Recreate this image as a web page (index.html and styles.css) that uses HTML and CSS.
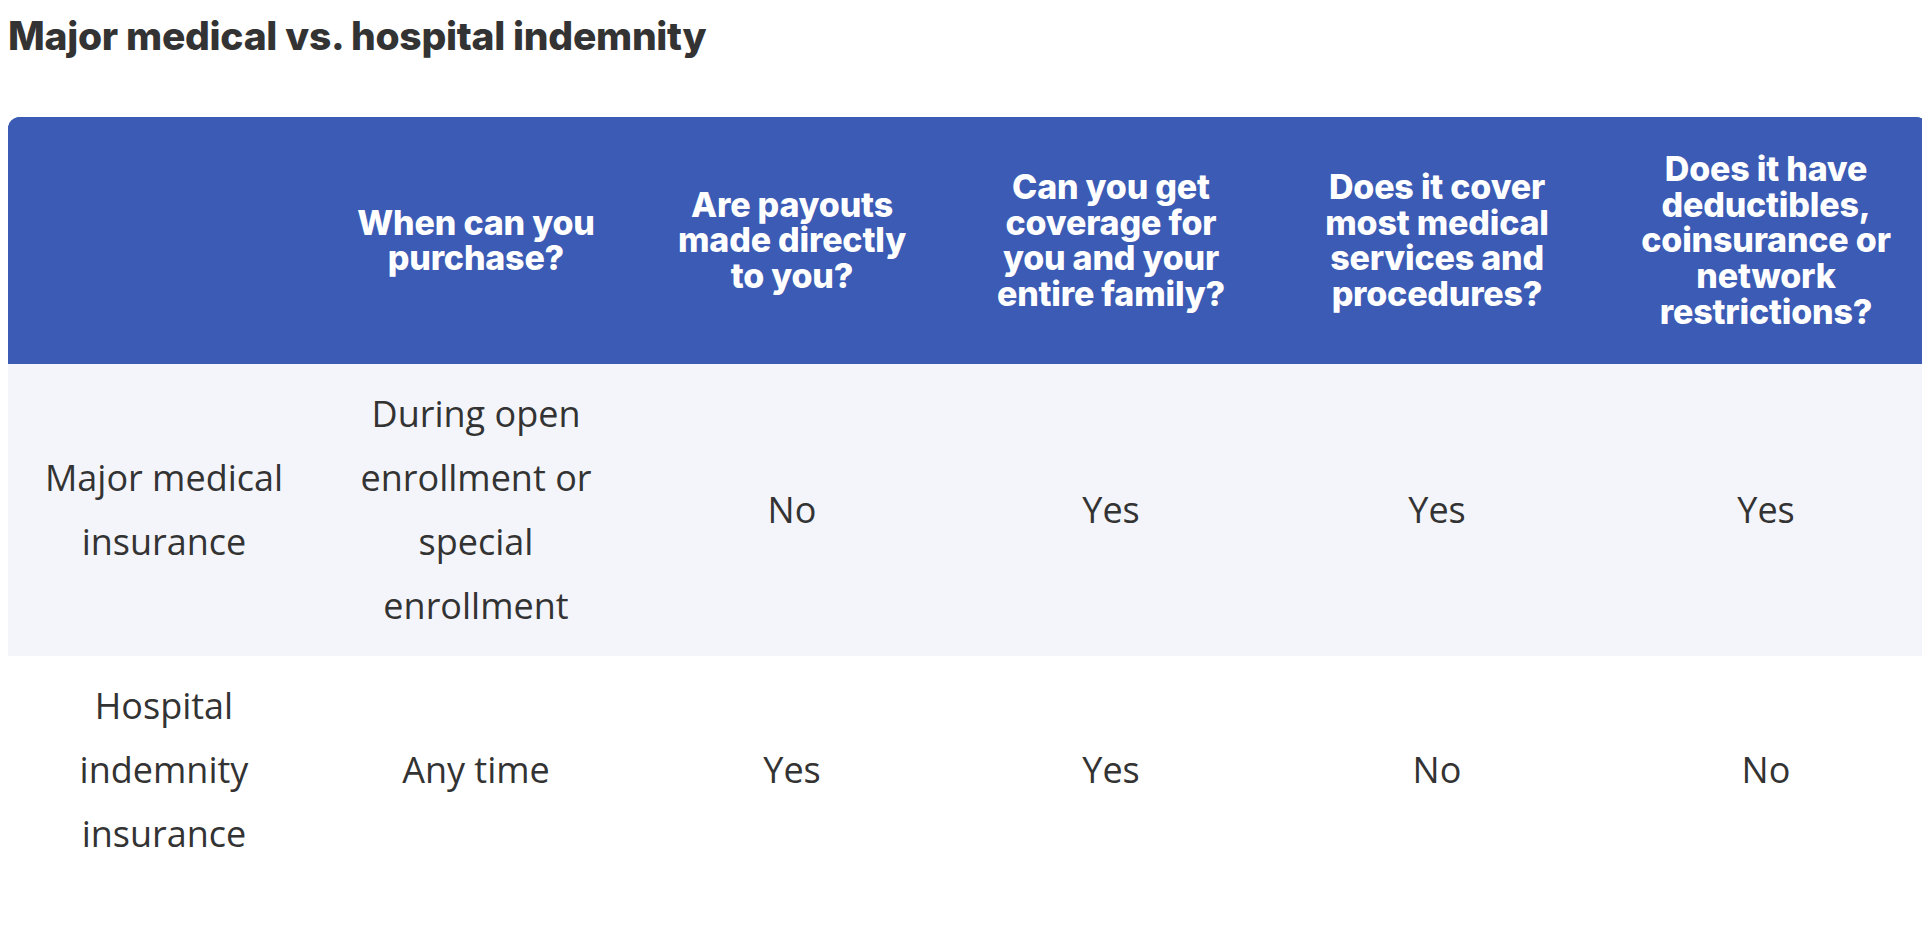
FILE: index.html
```html
<!DOCTYPE html>
<html lang="en">
<head>
<meta charset="utf-8">
<title>Major medical vs. hospital indemnity</title>
<link rel="stylesheet" href="styles.css">
</head>
<body>
<h2 class="title">Major medical vs. hospital indemnity</h2>
<table class="compare">
  <colgroup>
    <col class="c1"><col class="c2"><col class="c3"><col class="c4"><col class="c5"><col class="c6">
  </colgroup>
  <thead>
    <tr>
      <th></th>
      <th>When can you<br>purchase?</th>
      <th>Are payouts<br>made directly<br>to you?</th>
      <th>Can you get<br>coverage for<br>you and your<br>entire family?</th>
      <th>Does it cover<br>most medical<br>services and<br>procedures?</th>
      <th>Does it have<br>deductibles,<br>coinsurance or<br>network<br>restrictions?</th>
    </tr>
  </thead>
  <tbody>
    <tr class="shade">
      <td>Major medical<br>insurance</td>
      <td>During open<br>enrollment or<br>special<br>enrollment</td>
      <td>No</td>
      <td>Yes</td>
      <td>Yes</td>
      <td>Yes</td>
    </tr>
    <tr>
      <td>Hospital<br>indemnity<br>insurance</td>
      <td>Any time</td>
      <td>Yes</td>
      <td>Yes</td>
      <td>No</td>
      <td>No</td>
    </tr>
  </tbody>
</table>
</body>
</html>
```
FILE: styles.css
```css
html, body {
  background: #ffffff;
}
body {
  margin: 8px;
  font-family: "Open Sans", "Noto Sans", sans-serif;
  color: #333333;
}
.title {
  margin: 8px 0 0;
  font-family: Inter, "Noto Sans", sans-serif;
  font-weight: 800;
  font-size: 39px;
  line-height: 40px;
  letter-spacing: -0.3px;
  color: #333333;
}
.compare {
  margin-top: 61px;
  width: 1920px;
  border-collapse: collapse;
  border-spacing: 0;
  table-layout: fixed;
}
.c1 { width: 312px; }
.c2 { width: 312px; }
.c3 { width: 320px; }
.c4 { width: 318px; }
.c5 { width: 334px; }
.c6 { width: 324px; }
.compare thead tr {
  background: #3b5bb5;
}
.compare th {
  background: #3b5bb5;
  color: #ffffff;
  font-family: Inter, "Noto Sans", sans-serif;
  font-weight: 800;
  font-size: 34px;
  line-height: 35.7px;
  letter-spacing: -0.2px;
  padding: 34px 8px;
  text-align: center;
  vertical-align: middle;
}
.compare th:first-child {
  border-top-left-radius: 12px;
}
.compare th:last-child {
  border-top-right-radius: 12px;
}
.compare td {
  font-size: 36px;
  line-height: 64px;
  padding: 18px 8px;
  text-align: center;
  vertical-align: middle;
  color: #333333;
}
.compare tr.shade td {
  background: #f4f5fa;
}
```
